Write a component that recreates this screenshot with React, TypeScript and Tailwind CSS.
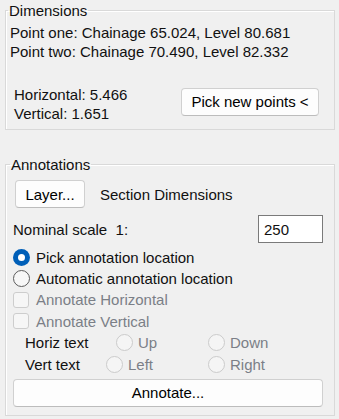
import React from 'react';

const font = { fontFamily: '"Liberation Sans", Arial, sans-serif' };

function WinButton({ children, className = '' }: { children: React.ReactNode; className?: string }) {
  return (
    <button
      className={`h-[28px] rounded-[4px] border border-[#d0d0d0] border-b-[#bcbcbc] bg-[#fdfdfd] text-[15px] text-black ${className}`}
    >
      {children}
    </button>
  );
}

function Radio({ checked, disabled }: { checked?: boolean; disabled?: boolean }) {
  if (checked) {
    return (
      <span className="flex h-[17px] w-[17px] shrink-0 items-center justify-center rounded-full bg-[#005fb8]">
        <span className="h-[7px] w-[7px] rounded-full bg-white" />
      </span>
    );
  }
  return (
    <span
      className={`h-[17px] w-[17px] shrink-0 rounded-full border ${
        disabled ? 'border-[#cbcbcb] bg-[#f5f5f5]' : 'border-[#5c5c5c] bg-[#f7f7f7]'
      }`}
    />
  );
}

function Checkbox() {
  return <span className="h-[16px] w-[16px] shrink-0 rounded-[3px] border border-[#cdcdcd] bg-[#f6f6f6]" />;
}

export default function App() {
  return (
    <div className="h-[419px] w-[339px] bg-[#f0f0f0] pt-[1px] text-[15px] leading-[19px] text-[#111]" style={font}>
      <fieldset className="mx-[5px] w-[330px] border border-[#d9d9d9] px-[4px] pb-[6px] shadow-[inset_1px_1px_0_#fff]">
        <legend className="ml-[-2px] px-px">Dimensions</legend>
        <div className="pt-[3px]">
          <div>Point one: Chainage 65.024, Level 80.681</div>
          <div>Point two: Chainage 70.490, Level 82.332</div>
        </div>
        <div className="mt-[24px] flex items-start">
          <div className="flex-1 pl-[4px]">
            <div>Horizontal: 5.466</div>
            <div>Vertical: 1.651</div>
          </div>
          <WinButton className="mr-[11px] mt-[2.5px] w-[138px]">Pick new points &lt;</WinButton>
        </div>
      </fieldset>

      <fieldset className="mx-[5px] mt-[25px] w-[330px] border border-[#d9d9d9] pb-[8px] pl-[7px] pr-[11px] shadow-[inset_1px_1px_0_#fff]">
        <legend className="ml-[-3px] px-px">Annotations</legend>
        <div className="mt-[6px] flex items-center gap-[15px] pl-[2px]">
          <WinButton className="w-[70px]">Layer...</WinButton>
          <span>Section Dimensions</span>
        </div>
        <div className="mt-[7px] flex items-center justify-between">
          <span className="whitespace-pre">Nominal scale  1:</span>
          <div className="flex h-[28px] w-[65px] items-center border border-[#7a7a7a] bg-white pl-[5px]">250</div>
        </div>
        <div className="mt-[3.5px]">
          <div className="flex h-[21.4px] items-center gap-[6px]">
            <Radio checked />
            <span>Pick annotation location</span>
          </div>
          <div className="flex h-[21.4px] items-center gap-[6px]">
            <Radio />
            <span>Automatic annotation location</span>
          </div>
          <div className="flex h-[21.4px] items-center gap-[7px] text-[#7b7f87]">
            <Checkbox />
            <span>Annotate Horizontal</span>
          </div>
          <div className="flex h-[21.4px] items-center gap-[7px] text-[#7b7f87]">
            <Checkbox />
            <span>Annotate Vertical</span>
          </div>
          <div className="flex h-[21.4px] items-center pl-[12px]">
            <span className="w-[91px]">Horiz text</span>
            <div className="flex w-[92px] items-center gap-[5px] text-[#7b7f87]">
              <Radio disabled />
              <span>Up</span>
            </div>
            <div className="flex items-center gap-[5px] text-[#7b7f87]">
              <Radio disabled />
              <span>Down</span>
            </div>
          </div>
          <div className="flex h-[21.4px] items-center pl-[12px]">
            <span className="w-[81px]">Vert text</span>
            <div className="flex w-[102px] items-center gap-[5px] text-[#7b7f87]">
              <Radio disabled />
              <span>Left</span>
            </div>
            <div className="flex items-center gap-[5px] text-[#7b7f87]">
              <Radio disabled />
              <span>Right</span>
            </div>
          </div>
        </div>
        <WinButton className="mt-[4px] w-full">Annotate...</WinButton>
      </fieldset>
    </div>
  );
}
